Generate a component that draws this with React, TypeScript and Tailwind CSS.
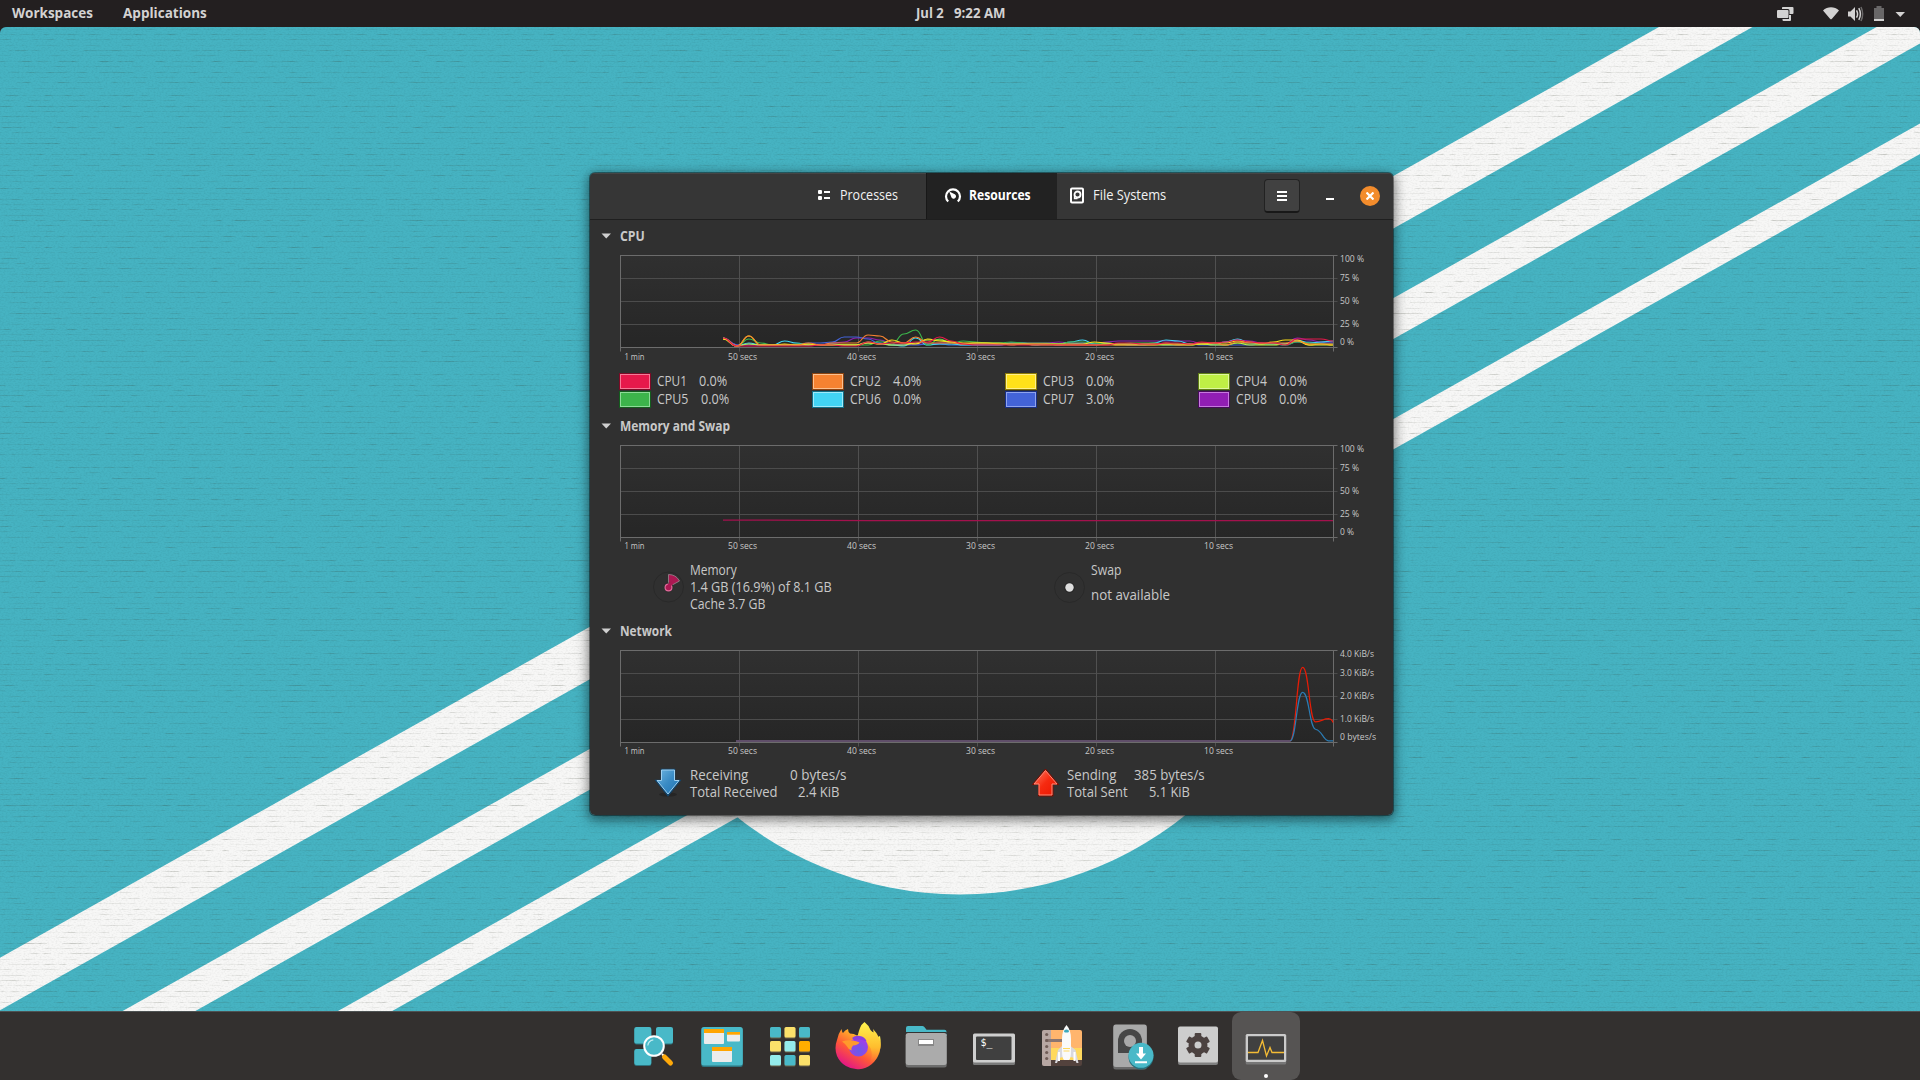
import React, { useLayoutEffect, useRef, useState } from "react";

/** Text squeezed horizontally so that it takes exactly `w` pixels. */
function Txt({ w, children, className = "" }: { w: number; children: string; className?: string }) {
  const ref = useRef<HTMLSpanElement>(null);
  const [k, setK] = useState(1);
  useLayoutEffect(() => {
    if (ref.current) setK(w / ref.current.offsetWidth);
  }, [w]);
  return (
    <span className={"inline-block shrink-0 whitespace-pre " + className} style={{ width: w }}>
      <span ref={ref} className="inline-block origin-left" style={{ transform: `translateY(-1px) scaleX(${k})` }}>
        {children}
      </span>
    </span>
  );
}

const edges = [
  [957.7, 1010.2],
  [1079.8, 1120.6],
  [1200.6, 1231],
];

// Thread rows of the wallpaper's fabric pattern: offset and strength.
const threads = [
  [2, 0.9], [7, 0.5], [13, 1], [18, 0.6], [23, 0.8], [29, 0.5], [34, 1], [39, 0.7], [45, 0.5], [50, 0.9],
  [55, 0.6], [61, 1], [66, 0.5], [72, 0.8], [77, 0.6], [82, 0.9], [88, 0.5],
];

function Wallpaper() {
  const m = 0.561;
  return (
    <svg className="absolute inset-0" width="1920" height="1080" viewBox="0 0 1920 1080">
      <defs>
        <filter id="dashes" x="0" y="0" width="100%" height="100%" colorInterpolationFilters="sRGB">
          <feTurbulence type="fractalNoise" baseFrequency="0.09 0.6" numOctaves="3" seed="7" />
          <feColorMatrix values="0 0 0 0 0.22  0 0 0 0 0.24  0 0 0 0 0.18  2.6 0 0 0 -1" />
        </filter>
        <filter id="grain" x="0" y="0" width="100%" height="100%" colorInterpolationFilters="sRGB">
          <feTurbulence type="fractalNoise" baseFrequency="0.5 0.8" numOctaves="2" seed="3" />
          <feColorMatrix values="0 0 0 0 0  0 0 0 0 0  0 0 0 0 0  0.9 0 0 0 -0.38" />
        </filter>
        <pattern id="threads" width="1920" height="93" patternUnits="userSpaceOnUse">
          {threads.map(([y, o]) => (
            <rect key={y} y={y} width="1920" height="1" fill="#fff" opacity={o} />
          ))}
        </pattern>
        <mask id="rows">
          <rect width="1920" height="1080" fill="url(#threads)" />
        </mask>
        <clipPath id="screen">
          <path d="M0 1080V33a6 6 0 0 1 6-6H1914a6 6 0 0 1 6 6V1080z" />
        </clipPath>
      </defs>
      <rect width="1920" height="1080" fill="#231f20" />
      <g clipPath="url(#screen)">
        <rect width="1920" height="1080" fill="#46b3c2" />
        {edges.map(([a, b]) => (
          <path key={a} fill="#f7f7f6" d={`M0 ${a}L1920 ${a - m * 1920}V${b - m * 1920}L0 ${b}z`} />
        ))}
        <circle cx="960" cy="534.500" r="360" fill="#f7f7f6" />
        <g mask="url(#rows)">
          <rect width="1920" height="1080" filter="url(#dashes)" opacity="0.24" />
        </g>
        <rect width="1920" height="1080" filter="url(#grain)" opacity="0.13" />
      </g>
    </svg>
  );
}

function TopBar() {
  return (
    <header className="relative flex h-[27px] items-center text-[14px] font-bold leading-5 text-[#d3d2d2]">
      <div className="flex flex-1 gap-[30px] pl-3">
        <Txt w={81}>Workspaces</Txt>
        <Txt w={84}>Applications</Txt>
      </div>
      <div className="mr-[11px] flex gap-[10px]">
        <Txt w={28}>Jul 2</Txt>
        <Txt w={52}>9:22 AM</Txt>
      </div>
      <div className="flex flex-1 justify-end">
        <svg className="-mt-[2px]" width="144" height="24" viewBox="1776 0 144 24" fill="#d3d2d2">
          <path d="M1782.5 6h10a1 1 0 0 1 1 1v5a1 1 0 0 1-1 1h-3v-3.500a1.500 1.500 0 0 0-1.500-1.500h-6V7a1 1 0 0 1 .5-1z" />
          <rect x="1777" y="9" width="11.500" height="8" rx="1" />
          <path d="M1782.500 18h6.500v-4h2v5a1 1 0 0 1-1 1h-6.500a1 1 0 0 1-1-1z" />
          <path d="M1823 9.500c4.500-4.400 11.500-4.400 16 0L1832.200 17.600a1.500 1.500 0 0 1-2.400 0z" />
          <path d="M1848 10.500h2.500L1855 6v14l-4.500-4.500H1848z" />
          <path d="M1856.500 9.300q2.200 3.700 0 7.400M1858.800 7.200q3.200 5.800 0 11.600" fill="none" stroke="#d3d2d2" strokeWidth="1.500" />
          <path d="M1861 6q3.300 7 0 14" fill="none" stroke="#6b696a" strokeWidth="1.500" />
          <path d="M1876.500 5h5v2h2.500v13h-10V7h2.500z" fill="#696768" />
          <rect x="1874" y="18" width="10" height="2" />
          <path d="M1895.500 11h9.500l-4.750 5z" />
        </svg>
      </div>
    </header>
  );
}

const F = "'Open Sans', 'Noto Sans', sans-serif";
const cols = [0.5, 119.5, 238.5, 357.5, 476.5, 595.5, 713.5];
const rows = [0.5, 23.5, 46.5, 69.5, 92.5];
const xTicks: [string, number, number][] = [
  ["1 min", 4.5, 20],
  ["50 secs", 108, 29],
  ["40 secs", 227, 29],
  ["30 secs", 346, 29],
  ["20 secs", 465, 29],
  ["10 secs", 584, 29],
];
const yBase = [7, 26, 49, 72, 90];
const percent: [string, number][] = [
  ["100 %", 24],
  ["75 %", 19],
  ["50 %", 19],
  ["25 %", 19],
  ["0 %", 14],
];
const rates: [string, number][] = [
  ["4.0 KiB/s", 34],
  ["3.0 KiB/s", 34],
  ["2.0 KiB/s", 34],
  ["1.0 KiB/s", 34],
  ["0 bytes/s", 36],
];

function Chart({ labels, base = 104, children }: { labels: [string, number][]; base?: number; children: React.ReactNode }) {
  return (
    <svg className="ml-[30px] block" width="765" height="113" viewBox="0 -3 765 113">
      <defs>
        <linearGradient id="plot" x1="0" y1="0" x2="0" y2="1">
          <stop offset="0" stopColor="#303030" />
          <stop offset="1" stopColor="#262626" />
        </linearGradient>
      </defs>
      <rect x="0.500" y="0.500" width="713" height="92" fill="url(#plot)" />
      <g stroke="#555555" fill="none">
        {rows.slice(1, 4).map((y) => (
          <path key={y} d={`M0 ${y}H717.500`} stroke="#4c4c4c" />
        ))}
        {cols.slice(1, 6).map((x) => (
          <path key={x} d={`M${x} 0V96.500`} stroke="#505050" />
        ))}
        <path d="M0 .5H717.500M0 92.500H717.500M.5 0V96.500M713.500 0V96.500" stroke="#6c6c6c" />
      </g>
      {children}
      <g fontFamily={F} fontSize="8.500" fill="#c8c8c8">
        {xTicks.map(([t, x, w]) => (
          <text key={t} x={x} y={base} textLength={w} lengthAdjust="spacingAndGlyphs">
            {t}
          </text>
        ))}
        {labels.map(([t, w], i) => (
          <text key={t} x={720} y={yBase[i]} textLength={w} lengthAdjust="spacingAndGlyphs">
            {t}
          </text>
        ))}
      </g>
    </svg>
  );
}

function smooth(pts: number[][]) {
  return pts
    .map(([x, y], i) => {
      if (!i) return `M${x} ${y}`;
      const [px, py] = pts[i - 1];
      const c = (px + x) / 2;
      return `C${c} ${py} ${c} ${y} ${x} ${y}`;
    })
    .join("");
}

// Load samples, one per second: height in pixels above the idle line.
const load: [string, number[]][] = [
  ["#911eb4", [8, 1, 1, 1, 1, 1, 1, 1, 1, 3, 4, 8, 8, 6, 2, 1, 2, 2, 3, 3, 2, 2, 2, 2, 3, 3, 3, 3, 4, 3, 3, 2, 4, 5, 5, 5, 5, 5, 5, 5, 2, 2, 4, 6, 5, 3, 2, 2, 8, 6, 4, 4]],
  ["#4363d8", [8, 1, 2, 1, 1, 1, 2, 3, 3, 4, 9, 9, 7, 2, 1, 1, 1, 2, 2, 1, 1, 1, 1, 1, 2, 2, 2, 2, 1, 2, 3, 2, 3, 2, 1, 1, 2, 1, 1, 2, 1, 1, 1, 1, 1, 2, 2, 1, 4, 4, 3, 3]],
  ["#42d4f4", [8, 0, 3, 1, 1, 5, 3, 1, 1, 2, 1, 1, 3, 3, 1, 0, 8, 1, 2, 2, 1, 1, 1, 1, 3, 3, 1, 2, 2, 4, 6, 2, 2, 2, 2, 2, 3, 6, 5, 2, 2, 2, 4, 7, 3, 2, 2, 2, 6, 3, 4, 5]],
  ["#3cb44b", [8, 0, 7, 3, 1, 1, 2, 2, 1, 1, 1, 1, 1, 5, 2, 12, 16, 1, 7, 3, 5, 4, 3, 3, 4, 3, 3, 3, 2, 4, 4, 3, 2, 2, 3, 3, 3, 2, 2, 1, 2, 2, 1, 3, 2, 2, 2, 1, 4, 3, 2, 2]],
  ["#bfef45", [7, 0, 2, 1, 1, 1, 1, 1, 1, 1, 1, 1, 4, 2, 1, 1, 3, 6, 6, 4, 2, 3, 3, 3, 1, 2, 1, 1, 1, 1, 1, 1, 2, 1, 1, 1, 1, 1, 1, 1, 2, 1, 1, 3, 1, 1, 1, 2, 5, 1, 1, 1]],
  ["#ffe119", [7, 0, 10, 1, 1, 2, 1, 2, 1, 1, 1, 1, 3, 2, 6, 3, 2, 7, 5, 4, 3, 3, 3, 2, 2, 2, 2, 2, 2, 2, 2, 4, 3, 2, 2, 2, 2, 2, 2, 2, 2, 3, 3, 5, 4, 2, 4, 6, 6, 1, 2, 1]],
  ["#f58231", [8, 0, 10, 1, 1, 1, 1, 3, 1, 3, 3, 3, 11, 10, 4, 3, 9, 3, 3, 3, 2, 2, 2, 2, 2, 2, 2, 2, 1, 1, 1, 1, 1, 1, 1, 1, 1, 3, 1, 1, 3, 3, 1, 4, 3, 3, 3, 3, 5, 2, 2, 2]],
  ["#e6194b", [8, 0, 0, 0, 0, 0, 0, 0, 1, 1, 0, 0, 4, 2, 3, 3, 4, 4, 9, 5, 2, 1, 1, 1, 1, 1, 1, 1, 1, 1, 1, 1, 1, 3, 3, 2, 2, 3, 3, 2, 4, 3, 4, 6, 4, 3, 3, 1, 7, 7, 7, 5]],
];

const cpus: [string, number, string, string, string, string][] = [
  ["CPU1", 29.5, "0.0%", "bg-[#e6194b]", "border-[#f47a97]", "border-[#7d0a26]"],
  ["CPU2", 30.5, "4.0%", "bg-[#f58231]", "border-[#fbc08f]", "border-[#8a4310]"],
  ["CPU3", 30.5, "0.0%", "bg-[#ffe119]", "border-[#fff08a]", "border-[#8c7a05]"],
  ["CPU4", 30.5, "0.0%", "bg-[#bfef45]", "border-[#dff79f]", "border-[#5e7d14]"],
  ["CPU5", 31, "0.0%", "bg-[#3cb44b]", "border-[#8ddb98]", "border-[#145c1e]"],
  ["CPU6", 30.5, "0.0%", "bg-[#42d4f4]", "border-[#a0eafa]", "border-[#126e86]"],
  ["CPU7", 30.5, "3.0%", "bg-[#4363d8]", "border-[#8fa3ee]", "border-[#182f85]"],
  ["CPU8", 30.5, "0.0%", "bg-[#911eb4]", "border-[#c678de]", "border-[#470a5b]"],
];

function Expander({ title, w, className }: { title: string; w: number; className?: string }) {
  return (
    <div className={"flex h-8 items-center pl-[11px] " + (className ?? "")}>
      <svg width="19" height="6" viewBox="0 0 19 6">
        <path d="M.5.500h9.500l-4.750 5z" fill="#cfcfcf" />
      </svg>
      <Txt w={w} className="font-bold">
        {title}
      </Txt>
    </div>
  );
}

function SystemMonitor() {
  return (
    <main className="relative ml-[590px] mt-[146px] h-[642px] w-[803px] overflow-hidden rounded-[5px] bg-[#303030] text-[14px] leading-[17px] text-[#c8c8c8]">
      <div className="flex h-[47px] border-b border-[#1f1f1f] bg-[#363636] text-[#f2f2f2] shadow-[inset_0_1px_0_#454545]">
        <div className="flex w-[336px] items-center pb-[2px] pl-[227px]">
          <svg width="23" height="12" viewBox="0 0 23 12" fill="#fff">
            <rect x="1" y="1" width="4" height="4" rx="1" />
            <rect x="1" y="7" width="4" height="4" rx="1" />
            <rect x="7" y="2" width="6" height="2" />
            <rect x="7" y="8" width="6" height="2" />
          </svg>
          <Txt w={58}>Processes</Txt>
        </div>
        <div className="flex w-[131px] items-center border-l border-[#181818] bg-[#222222] pb-[2px] pl-[17px] font-bold text-white">
          <svg width="24.500" height="17" viewBox="0 0 24.500 17" fill="none">
            <path d="M4.200 14.500A7 7 0 1 1 13.800 14.500" stroke="#fff" strokeWidth="2.200" />
            <path d="M5.200 4.600l5.600 2.600a2.400 2.400 0 1 1-3.300 3.200z" fill="#fff" />
          </svg>
          <Txt w={61.5}>Resources</Txt>
        </div>
        <div className="flex w-[207px] items-center pb-[2px] pl-[13px]">
          <svg width="23" height="17" viewBox="0 0 23 17" fill="none" stroke="#fff" strokeWidth="2">
            <rect x="1" y="1.500" width="12" height="14" rx="1" />
            <circle cx="7.500" cy="7.500" r="3" strokeWidth="1.800" />
            <path d="M4.500 8v3.500h3" strokeWidth="1.300" />
          </svg>
          <Txt w={73.5}>File Systems</Txt>
        </div>
        <div className="mt-[6px] flex h-[34px] w-[36px] items-center justify-center rounded-[4px] border border-b-2 border-[#222222] border-b-[#181818] bg-[#414141]">
          <svg width="10" height="10" viewBox="0 0 10 10" stroke="#fff" strokeWidth="2">
            <path d="M0 1h10M0 5h10M0 9h10" />
          </svg>
        </div>
        <div className="ml-[26px] mt-[25px] h-[2px] w-2 bg-white" />
        <div className="ml-[26px] mt-[13px] flex size-5 items-center justify-center rounded-full bg-[#f38c2c]">
          <svg width="8" height="8" viewBox="0 0 8 8" stroke="#fff" strokeWidth="2.200">
            <path d="M.5.500l7 7M7.500.500l-7 7" />
          </svg>
        </div>
      </div>

      <Expander title="CPU" w={24.5} />
      <Chart labels={percent} base={105}>
        <g fill="none" strokeWidth="1.200">
          {load.map(([c, v]) => (
            <path key={c} stroke={c} d={smooth(v.map((h, k) => [k ? 105 + 11.92 * k : 103, 91 - h]))} />
          ))}
        </g>
      </Chart>
      <div className="ml-[29px] mt-[7px] grid w-[772px] grid-cols-4">
        {cpus.map(([n, nw, v, bg, inner, outer]) => (
          <div key={n} className="flex h-[18px] items-center">
            <span className={"mr-[6px] box-border h-[17px] w-[32px] border " + outer}>
              <span className={"block h-full w-full border " + bg + " " + inner} />
            </span>
            <Txt w={nw} className="mr-[12.500px]">
              {n}
            </Txt>
            <Txt w={28}>{v}</Txt>
          </div>
        ))}
      </div>

      <Expander title="Memory and Swap" w={110} className="mt-[2px]" />
      <Chart labels={percent}>
        <path d="M103 75.200H150L250 75.700H713" stroke="#a3114d" strokeWidth="1.200" fill="none" />
      </Chart>
      <div className="mt-[7px] flex h-[51px]">
        <svg className="ml-[62px] mt-[8px]" width="38" height="34" viewBox="0 0 38 34">
          <circle cx="16.500" cy="17" r="15" fill="none" stroke="#292929" />
          <path d="M16.500 17V4.500A12.500 12.500 0 0 1 27.500 11z" fill="#ab1852" stroke="#9a8990" strokeWidth=".8" />
          <circle cx="16.500" cy="17.500" r="4.800" fill="#2a2a2a" />
          <circle cx="16.500" cy="17.500" r="3.400" fill="#ab1852" stroke="#e26b9b" strokeWidth="1.200" />
          <path d="M16.500 16l3.500-3" stroke="#ab1852" strokeWidth="3" />
        </svg>
        <div className="flex w-[363px] flex-col">
          <Txt w={47}>Memory</Txt>
          <Txt w={142}>1.4 GB (16.9%) of 8.1 GB</Txt>
          <Txt w={75.5}>Cache 3.7 GB</Txt>
        </div>
        <svg className="mt-[8px]" width="38" height="34" viewBox="0 0 38 34">
          <circle cx="16.500" cy="17.500" r="15" fill="none" stroke="#292929" />
          <circle cx="16.500" cy="17.500" r="5.300" fill="#272727" />
          <circle cx="16.500" cy="17.500" r="4.200" fill="#dedede" />
        </svg>
        <div className="flex flex-col gap-[8px]">
          <Txt w={30.5}>Swap</Txt>
          <Txt w={79}>not available</Txt>
        </div>
      </div>

      <Expander title="Network" w={51.5} className="mt-[2px]" />
      <Chart labels={rates}>
        <path d="M116 91H670.500" stroke="#5f4e69" strokeWidth="2" />
        <g fill="none" strokeWidth="1.200">
          <path stroke="#e51c06" d={smooth([[670, 91], [682.7, 17.3], [695.5, 71.8]]) + "C702 71.500 703 68.700 708.500 68.700Q712 69 713 72.500"} />
          <path stroke="#2b7cb4" d={smooth([[670, 91], [682.7, 42.3], [696, 79.5]]) + "C702 80.500 703.500 90.800 708.500 90.800H713"} />
        </g>
      </Chart>
      <div className="mt-[7px] flex">
        <svg className="ml-[62px] -mt-px" width="38" height="34" viewBox="0 0 38 34">
          <defs>
            <linearGradient id="down" x1="0" y1="0" x2="1" y2="1">
              <stop offset="0" stopColor="#6db4e0" />
              <stop offset=".5" stopColor="#3a8bc4" />
              <stop offset="1" stopColor="#1f73b3" />
            </linearGradient>
          </defs>
          <ellipse cx="16" cy="28.500" rx="9" ry="2" fill="#252525" />
          <path d="M9.500 3.500h13v11h5.500L16 29.500 4 14.500h5.500z" fill="#12466e" stroke="#12466e" strokeWidth="1.500" />
          <path d="M9.500 4h13v10.500h4.500L16 28 5 14.500h4.500z" fill="url(#down)" stroke="#9fd0f0" />
        </svg>
        <div className="flex w-[92.500px] flex-col">
          <Txt w={58}>Receiving</Txt>
          <Txt w={87.5}>Total Received</Txt>
        </div>
        <div className="flex w-[72px] flex-col items-center">
          <Txt w={57}>0 bytes/s</Txt>
          <Txt w={41}>2.4 KiB</Txt>
        </div>
        <svg className="ml-[174px] -mt-px" width="38.500" height="34" viewBox="0 0 38.500 34">
          <defs>
            <linearGradient id="up" x1="0" y1="0" x2="1" y2="1">
              <stop offset="0" stopColor="#ff7a62" />
              <stop offset=".5" stopColor="#f62a10" />
              <stop offset="1" stopColor="#ea1500" />
            </linearGradient>
          </defs>
          <path d="M16.500 3L29.500 18.500h-5.500v11.500H9.500V18.500H3.500z" fill="#7d0c00" stroke="#7d0c00" />
          <path d="M16.500 4.500L28 18h-5v11H10V18H5z" fill="url(#up)" stroke="#ff8f7c" />
        </svg>
        <div className="flex w-[66.500px] flex-col">
          <Txt w={49}>Sending</Txt>
          <Txt w={60.5}>Total Sent</Txt>
        </div>
        <div className="flex w-[72px] flex-col items-center">
          <Txt w={71}>385 bytes/s</Txt>
          <Txt w={40.5}>5.1 KiB</Txt>
        </div>
      </div>
    </main>
  );
}

const T = "#49b9c8";
const grid: [number, number, string][] = [
  [14, 15, T], [28.5, 15, "#fbe06a"], [43, 15, T],
  [14, 29, "#fbe06a"], [28.5, 29, "#94ebeb"], [43, 29, "#ffad00"],
  [14, 43, "#94ebeb"], [28.5, 43, T], [43, 43, "#fbe06a"],
];

const dockIcons: React.ReactNode[] = [
  <>
    <rect x="14.300" y="16" width="17" height="16.500" rx="2" fill="#2d7480" />
    <rect x="36" y="16" width="17" height="16.500" rx="2" fill="#2d7480" />
    <rect x="14.300" y="38" width="17" height="16" rx="2" fill="#2d7480" />
    <rect x="14.300" y="15" width="17" height="16.500" rx="2" fill={T} />
    <rect x="36" y="15" width="17" height="16.500" rx="2" fill={T} />
    <rect x="14.300" y="37" width="17" height="16" rx="2" fill={T} />
    <path d="M42 42l2.500 2.500" stroke="#fff" strokeWidth="2" />
    <path d="M44.500 45l6 6" stroke="#ffa90a" strokeWidth="5" strokeLinecap="round" />
    <circle cx="34" cy="34" r="9.800" fill={T} stroke="#fff" strokeWidth="2" />
    <path d="M27.800 33.500a6.500 6.500 0 0 1 5.500-5.700" stroke="#c5eef2" strokeWidth="1.200" fill="none" />
  </>,
  <>
    <rect x="13.300" y="17" width="41.500" height="38" rx="2.500" fill="#2d7480" />
    <rect x="13.300" y="15" width="41.500" height="38.500" rx="2.500" fill={T} />
    <rect x="16" y="17" width="20" height="15" rx="1" fill="#ececec" />
    <rect x="16" y="17" width="20" height="4" fill="#ffa500" />
    <rect x="39" y="20" width="13" height="9.500" rx="1" fill="#ececec" />
    <rect x="39" y="20" width="13" height="2.700" fill="#ffa500" />
    <rect x="24" y="35" width="20" height="15" rx="1" fill="#ececec" />
    <rect x="24" y="35" width="20" height="4" fill="#ffa500" />
  </>,
  <>
    {grid.map(([x, y, c]) => (
      <g key={`${x}-${y}`}>
        <rect x={x} y={y + 1} width="11" height="10.500" rx="1.500" fill="#6b6248" />
        <rect x={x} y={y} width="11" height="10.500" rx="1.500" fill={c} />
      </g>
    ))}
  </>,
  <>
    <defs>
      <linearGradient id="fx" x1=".85" y1=".1" x2=".25" y2=".95">
        <stop offset="0" stopColor="#fff44f" />
        <stop offset=".3" stopColor="#ffa52a" />
        <stop offset=".6" stopColor="#ff5a36" />
        <stop offset="1" stopColor="#e31587" />
      </linearGradient>
      <linearGradient id="fy" x1=".5" y1="0" x2=".5" y2="1">
        <stop offset="0" stopColor="#fff44f" />
        <stop offset=".6" stopColor="#ffbd2e" />
        <stop offset="1" stopColor="#ff7a35" stopOpacity="0" />
      </linearGradient>
      <radialGradient id="fz" cx=".5" cy=".7" r=".7">
        <stop offset="0" stopColor="#6a5be8" />
        <stop offset="1" stopColor="#a63be8" />
      </radialGradient>
    </defs>
    <path d="M17.500 17q.5 3 1.500 4 2-3 5-4 0 3 2 4.500 4 0 7 2L38 21q-4 5 4 10l14-7q2 9-1 17a22.400 22.400 0 0 1-42 3q-3-8 0-16 1-6 4.500-11z" fill="url(#fx)" />
    <path d="M40.500 10q4 3 6 8 2 2 3 2.500 0-2-.5-3.500 8 8 7.500 18-1 13-11 17 4-9 1-16-3-6-8-6-8 0-2.500-14 .5-3 4.500-6z" fill="url(#fy)" />
    <circle cx="34.500" cy="35" r="9.500" fill="url(#fz)" />
    <path d="M18 29.500q7-2.500 15 0l2.500 1q-1.500 2.500-6.500 3-2 2-1.500 5-3-1-4.500-4-2-3-5-5z" fill="#ff9a2b" />
    <path d="M28 26q4-3.500 10-1.500 4 2 4.500 5-7-3.500-12-1z" fill="#8a3fe0" />
  </>,
  <>
    <path d="M14 22v-6a2 2 0 0 1 2-2h14.500q1.500 0 2.500 1.800l1.500 2H52.500a2 2 0 0 1 2 2V24z" fill={T} />
    <rect x="13.700" y="24" width="41" height="31.500" rx="2.500" fill="#6d6d6d" />
    <rect x="13.700" y="20" width="41" height="2" fill="#333" />
    <rect x="13.700" y="21" width="41" height="32" rx="2.500" fill="#ababab" />
    <rect x="26" y="27" width="16" height="7" fill="#878787" />
    <rect x="27" y="28" width="14" height="4" fill="#fff" />
  </>,
  <>
    <rect x="13" y="25" width="42" height="28" rx="1.500" fill="#7a7a7a" />
    <rect x="13" y="21.500" width="42" height="29" rx="1.500" fill="#cfcfcf" />
    <rect x="16" y="24.500" width="35.500" height="23.500" rx="1" fill="#404040" />
    <text x="20.500" y="34" fontFamily="'DejaVu Sans Mono', monospace" fontSize="10" fill="#fff" textLength="12" lengthAdjust="spacingAndGlyphs">
      $_
    </text>
  </>,
  <>
    <rect x="14" y="18" width="40" height="36" rx="2" fill="#53423d" />
    <path d="M22 18H52a2 2 0 0 1 2 2V48H22z" fill="#ffb56d" />
    <path d="M23 36h31v12H23z" fill="#ffd95e" />
    <path d="M16 18h7v36h-7a2 2 0 0 1-2-2V20a2 2 0 0 1 2-2z" fill="#b7a7a3" />
    <rect x="17.500" y="27" width="17" height="3" fill="#8a7672" />
    {[22.500, 28.500, 34.500, 40.500, 46.500].map((y) => (
      <circle key={y} cx="18.700" cy={y} r="1.600" fill="#6f5c57" />
    ))}
    <path d="M34 34l-4 4-3 13 2 0 2-5 4-1h7.500l4 1 2 5h2l-3-13-5-4z" fill="#d9d9de" />
    <path d="M38.500 13q4.500 5 4.500 14v12q0 7-2 9h-5q-2-2-2-9V27q0-9 4.500-14z" fill="#fafafa" />
    <path d="M36.500 18q2-1 4 0l.5 2q-2.500 1-5 0z" fill="#3da9bd" />
    <path d="M35 36.500h7M35.500 39h6" stroke="#ffd95e" />
    <path d="M31 40v9M46.500 40v9" stroke="#fff" strokeWidth="2" />
  </>,
  <>
    <rect x="17.300" y="14" width="33.500" height="43.500" rx="2.500" fill="#6a6a6a" />
    <rect x="17.300" y="12.500" width="33.500" height="42.500" rx="2.500" fill="#a9a9a9" />
    <path d="M22 41V29a12 12 0 0 1 24 0v12z" fill="#474747" />
    <circle cx="34" cy="29" r="6" fill="#a9a9a9" />
    <circle cx="45" cy="45" r="12.500" fill="#27717d" />
    <circle cx="45" cy="43.300" r="12.500" fill={T} />
    <path d="M43 35h4v6.500h3l-5 6-5-6h3zM39 49.300h12v2H39z" fill="#fff" />
  </>,
  <>
    <rect x="14" y="17" width="40" height="36" rx="2" fill="#808080" />
    <rect x="14" y="14.500" width="40" height="36" rx="2" fill="#cdcdcd" />
    <circle cx="34" cy="33" r="6.500" fill="none" stroke="#4c4240" strokeWidth="6" />
    {[0, 60, 120, 180, 240, 300].map((a) => (
      <rect key={a} x="30.700" y="21" width="6.600" height="6" rx="1" fill="#4c4240" transform={`rotate(${a} 34 33)`} />
    ))}
  </>,
  <>
    <rect x="0" y="0" width="68" height="68" rx="9" fill="#565453" />
    <rect x="13.700" y="25" width="40.500" height="27.500" rx="1.500" fill="#777" />
    <rect x="13.700" y="22" width="40.500" height="28" rx="1.500" fill="#cbcbcb" />
    <rect x="16" y="24.300" width="36" height="23.500" rx=".5" fill="#404040" />
    <path d="M16 40.500h10l4.500-12 4 15.500 3.500-8.500 2 5h12" stroke="#f3bb35" strokeWidth="1.300" fill="none" />
    <circle cx="34" cy="64" r="2" fill="#fff" />
  </>,
];

function Dock() {
  return (
    <footer className="relative flex h-[69px] border-t border-[#4e5253] bg-[#33302f] pl-[620px]">
      {dockIcons.map((icon, i) => (
        <svg key={i} width="68" height="68" viewBox="0 0 68 68" className="shrink-0">
          {icon}
        </svg>
      ))}
    </footer>
  );
}

export default function App() {
  return (
    <div className="relative flex h-[1080px] w-[1920px] flex-col overflow-hidden font-['Open_Sans','Noto_Sans',sans-serif]">
      <Wallpaper />
      <TopBar />
      <div className="relative flex-1">
        <div className="absolute left-[590px] top-[146px] h-[642px] w-[803px] rounded-[5px] shadow-[0_0_0_1px_rgba(0,0,0,0.4),0_3px_12px_2px_rgba(0,0,0,0.5)]" />
        <div className="flow-root">
          <SystemMonitor />
        </div>
      </div>
      <Dock />
    </div>
  );
}
